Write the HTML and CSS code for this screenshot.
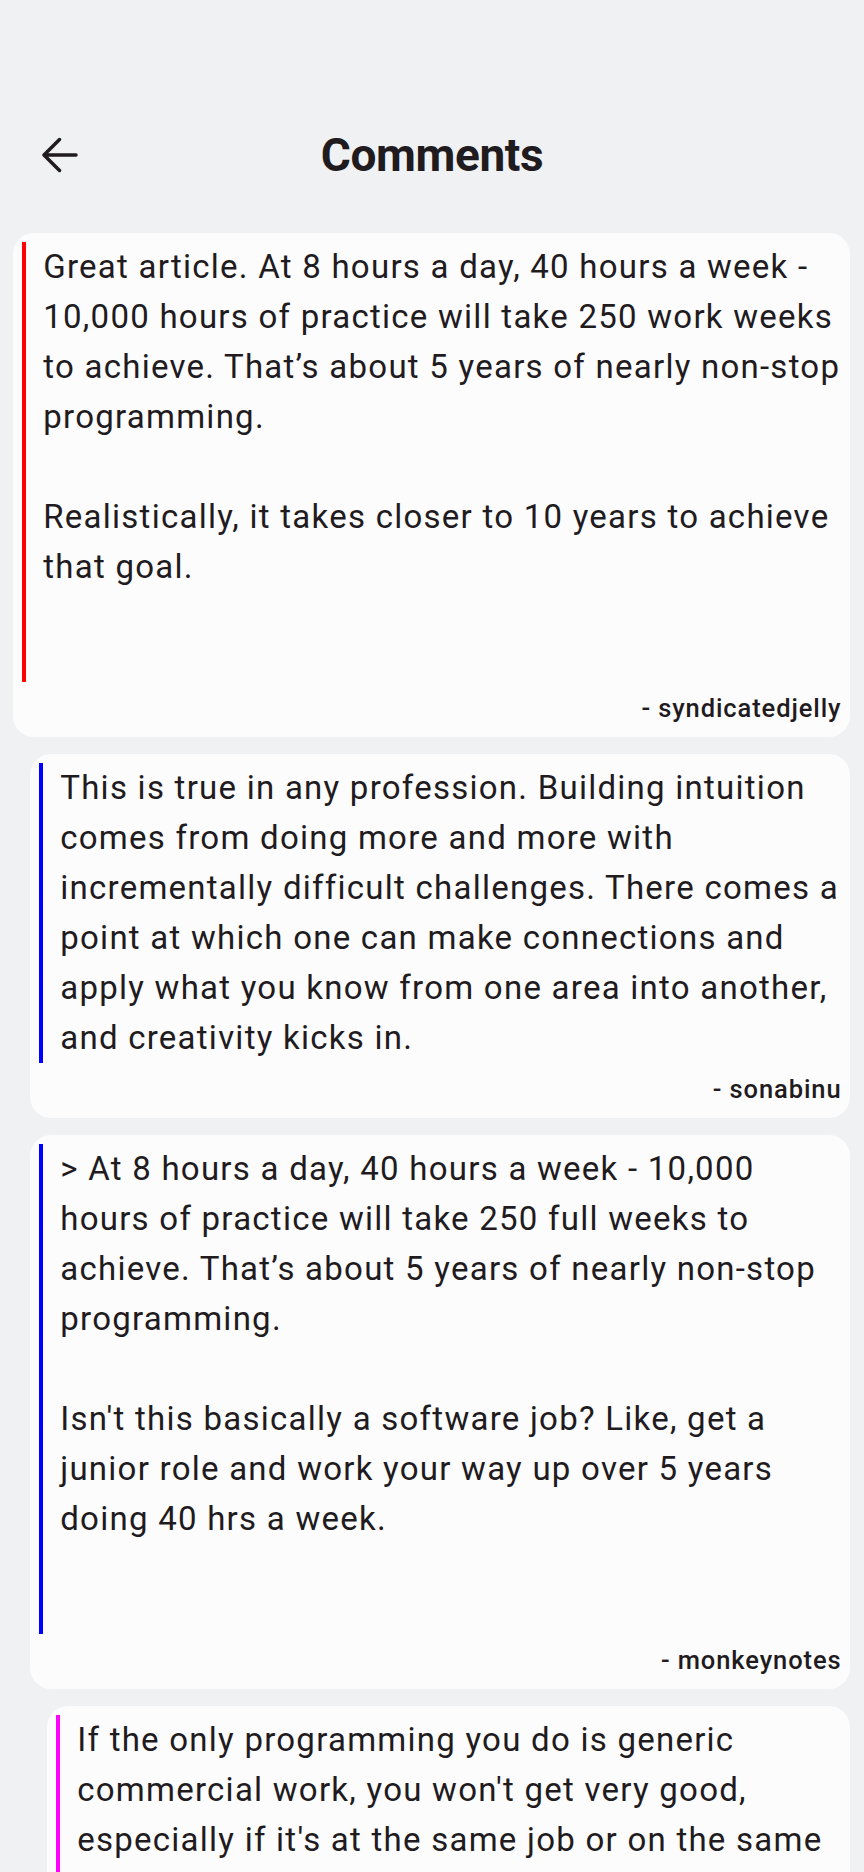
FILE: index.html
```html
<!DOCTYPE html>
<html lang="en">
<head>
<meta charset="utf-8">
<title>Comments</title>
<link rel="stylesheet" href="styles.css">
</head>
<body>
<header class="topbar">
  <button class="back" aria-label="Back">
    <svg width="36" height="36" viewBox="0 0 36 36" fill="none" stroke="#1f1b1e" stroke-width="3.5" stroke-linecap="round" stroke-linejoin="round">
      <path d="M34 18H2.5M17.5 2.5L2 18l15.5 15.5"/>
    </svg>
  </button>
  <h1 class="title">Comments</h1>
  <span></span>
</header>

<main class="thread">
  <article class="card level-0">
    <div class="body">
      <div class="bar bar-red"></div>
      <div class="text text-trail">Great article. At 8 hours a day, 40 hours a week - 10,000 hours of practice will take 250 work weeks to achieve. That’s about 5 years of nearly non-stop programming.<br><br>Realistically, it takes closer to 10 years to achieve that goal.</div>
    </div>
    <div class="author">- syndicatedjelly</div>
  </article>

  <article class="card level-1">
    <div class="body">
      <div class="bar bar-blue"></div>
      <div class="text">This is true in any profession. Building intuition comes from doing more and more with incrementally difficult challenges. There comes a point at which one can make connections and apply what you know from one area into another, and creativity kicks in.</div>
    </div>
    <div class="author">- sonabinu</div>
  </article>

  <article class="card level-1">
    <div class="body">
      <div class="bar bar-blue"></div>
      <div class="text text-trail">&gt; At 8 hours a day, 40 hours a week - 10,000 hours of practice will take 250 full weeks to achieve. That’s about 5 years of nearly non-stop programming.<br><br>Isn't this basically a software job? Like, get a junior role and work your way up over 5 years doing 40 hrs a week.</div>
    </div>
    <div class="author">- monkeynotes</div>
  </article>

  <article class="card level-2">
    <div class="body">
      <div class="bar bar-magenta"></div>
      <div class="text">If the only programming you do is generic commercial work, you won't get very good, especially if it's at the same job or on the same project for years.</div>
    </div>
  </article>
</main>
</body>
</html>
```

FILE: styles.css
```css
html, body {
  margin: 0;
  padding: 0;
}

body {
  background: #f0f1f3;
  font-family: Roboto, "Liberation Sans", sans-serif;
  color: #1f1b1e;
}

.topbar {
  display: grid;
  grid-template-columns: 1fr auto 1fr;
  align-items: center;
  height: 102px;
  margin-top: 104px;
}

.back {
  justify-self: start;
  display: flex;
  align-items: center;
  margin-left: 42px;
  padding: 0;
  border: 0;
  background: none;
}

.back svg {
  display: block;
}

.title {
  margin: 0;
  font-size: 46px;
  font-weight: 700;
  letter-spacing: -0.4px;
  line-height: 102px;
  color: #1f1b1e;
}

.thread {
  display: flex;
  flex-direction: column;
  gap: 17px;
  margin-top: 27px;
  padding: 0 14px 0 13px;
}

.card {
  background: #fcfcfd;
  border-radius: 21px;
  padding: 8.5px;
}

.level-1 {
  margin-left: 17px;
}

.level-2 {
  margin-left: 34px;
}

.body {
  display: flex;
  gap: 17.5px;
}

.bar {
  flex: none;
  width: 4.25px;
}

.bar-red {
  background: #ff0000;
}

.bar-blue {
  background: #0000ff;
}

.bar-magenta {
  background: #ff00ff;
}

.text {
  flex: 1;
  font-size: 33px;
  line-height: 50px;
  letter-spacing: 1.25px;
  color: #1f1b1e;
}

.text-trail {
  padding-bottom: 90px;
}

.author {
  margin-top: 5px;
  text-align: right;
  font-size: 25.5px;
  line-height: 42px;
  font-weight: 500;
  letter-spacing: 0.9px;
}
```
